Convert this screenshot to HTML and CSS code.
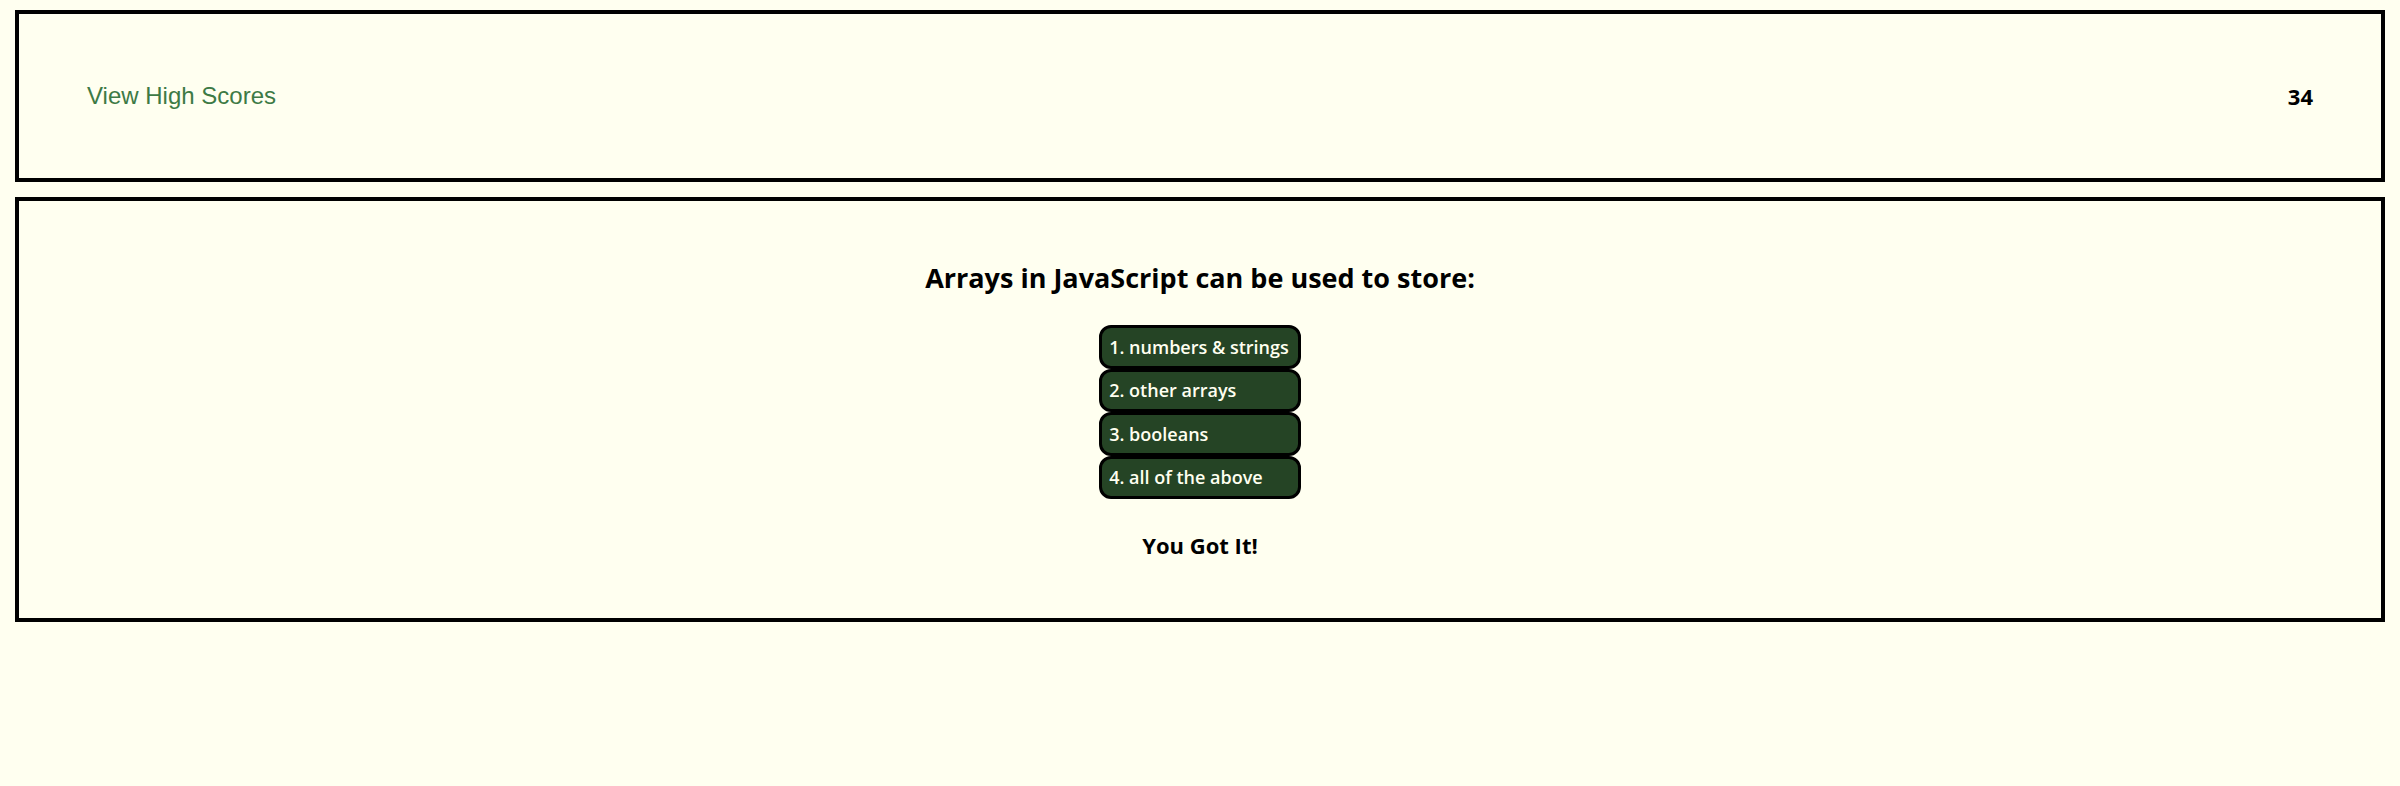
FILE: index.html
```html
<!DOCTYPE html>
<html lang="en">
<head>
<meta charset="utf-8">
<title>Code Quiz</title>
<link rel="stylesheet" href="styles.css">
</head>
<body>
<header class="top-bar">
  <a class="high-scores" href="#">View High Scores</a>
  <span class="timer">34</span>
</header>
<main class="quiz">
  <h2 class="question">Arrays in JavaScript can be used to store:</h2>
  <div class="choices">
    <button class="choice">1. numbers &amp; strings</button>
    <button class="choice">2. other arrays</button>
    <button class="choice">3. booleans</button>
    <button class="choice">4. all of the above</button>
  </div>
  <p class="result">You Got It!</p>
</main>
</body>
</html>
```
FILE: styles.css
```css
html, body {
  margin: 0;
  padding: 0;
  background: #fffff0;
}
body {
  padding: 10px 15px;
  font-family: "Open Sans", Lato, sans-serif;
  color: #000;
}
.top-bar {
  box-sizing: border-box;
  height: 172px;
  border: 4px solid #000;
  padding: 0 68px;
  display: flex;
  justify-content: space-between;
  align-items: center;
  margin-bottom: 15px;
}
.high-scores {
  font-family: "Liberation Sans", Arial, sans-serif;
  font-size: 24px;
  color: #3d7a45;
  text-decoration: none;
}
.timer {
  font-size: 22px;
  font-weight: 700;
}
.quiz {
  box-sizing: border-box;
  height: 425px;
  border: 4px solid #000;
  display: flex;
  flex-direction: column;
  align-items: center;
}
.question {
  margin: 62px 0 0;
  font-size: 27px;
  line-height: 30px;
  font-weight: 700;
}
.choices {
  margin-top: 32px;
  display: flex;
  flex-direction: column;
  align-items: stretch;
}
.choice {
  box-sizing: border-box;
  height: 43.5px;
  padding: 0 9px 0 7px;
  border: 3px solid #000;
  border-radius: 12px;
  background: #254425;
  color: #fffff0;
  font-family: "Open Sans", Lato, sans-serif;
  font-size: 18px;
  font-weight: 600;
  text-align: left;
  display: flex;
  align-items: center;
  cursor: pointer;
}
.result {
  margin: 34px 0 0;
  font-size: 22px;
  line-height: 24px;
  font-weight: 700;
}
```
